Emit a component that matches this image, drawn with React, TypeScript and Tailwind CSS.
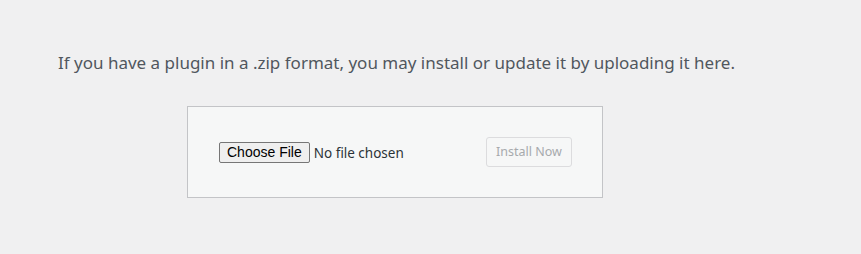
import React from 'react';

const App: React.FC = () => {
  return (
    <div className="min-h-[254px] w-[861px] bg-[#f0f0f1] font-['Noto_Sans',sans-serif] text-[#3c434a]">
      <div className="pl-[58px] pt-[51px]">
        <p className="text-[17px] leading-[24px] text-[#50575e]">
          If you have a plugin in a .zip format, you may install or update it by uploading it here.
        </p>
      </div>

      <div className="ml-[187px] mt-[31px] w-[416px] border border-[#c3c4c7] bg-[#f6f7f7] p-[30px]">
        <form className="flex h-[30px] items-center justify-between" onSubmit={(e) => e.preventDefault()}>
          <input
            type="file"
            className="ml-[1px] w-[200px] text-[13.5px] text-[#2c3338] file:mr-[4px] file:h-[21px] file:rounded-[2px] file:border file:border-[#767676] file:bg-[#efefef] file:px-[7px] file:font-['Liberation_Sans',sans-serif] file:text-[14px] file:leading-[18px] file:text-black"
          />
          <button
            type="submit"
            disabled
            className="h-[30px] w-[86px] whitespace-nowrap rounded-[3px] border border-[#dcdcde] bg-[#f6f7f7] text-[12.5px] text-[#a7aaad]"
          >
            Install Now
          </button>
        </form>
      </div>
    </div>
  );
};

export default App;
